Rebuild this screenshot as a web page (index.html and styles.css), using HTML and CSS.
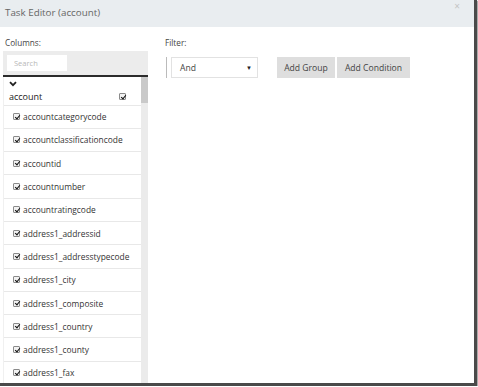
FILE: index.html
```html
<!DOCTYPE html>
<html>
<head>
<meta charset="utf-8">
<link rel="stylesheet" href="styles.css">
</head>
<body>
<div class="dialog">
  <div class="header">
    <span class="title">Task Editor (account)</span>
    <span class="close">×</span>
  </div>
  <div class="body">
    <div class="columns">
      <div class="label">Columns:</div>
      <div class="panel">
        <div class="panel-head">
          <input class="search" type="text" placeholder="Search">
        </div>
        <div class="list-wrap">
          <div class="list">
            <div class="group">
              <svg class="chev" width="8" height="6" viewBox="0 0 8 6"><path d="M1 1.2 L4 4.2 L7 1.2" fill="none" stroke="#222" stroke-width="1.8"/></svg>
              <div class="group-row"><span>account</span><span class="cb"></span></div>
            </div>
            <div class="row"><span class="cb"></span><span>accountcategorycode</span></div>
            <div class="row"><span class="cb"></span><span>accountclassificationcode</span></div>
            <div class="row"><span class="cb"></span><span>accountid</span></div>
            <div class="row"><span class="cb"></span><span>accountnumber</span></div>
            <div class="row"><span class="cb"></span><span>accountratingcode</span></div>
            <div class="row"><span class="cb"></span><span>address1_addressid</span></div>
            <div class="row"><span class="cb"></span><span>address1_addresstypecode</span></div>
            <div class="row"><span class="cb"></span><span>address1_city</span></div>
            <div class="row"><span class="cb"></span><span>address1_composite</span></div>
            <div class="row"><span class="cb"></span><span>address1_country</span></div>
            <div class="row"><span class="cb"></span><span>address1_county</span></div>
            <div class="row"><span class="cb"></span><span>address1_fax</span></div>
          </div>
          <div class="scrollbar"><div class="thumb"></div></div>
        </div>
      </div>
    </div>
    <div class="filter">
      <div class="label">Filter:</div>
      <div class="controls">
        <div class="bar"></div>
        <div class="select"><span>And</span><span class="arrow">▼</span></div>
        <button class="btn first">Add Group</button>
        <button class="btn second">Add Condition</button>
      </div>
    </div>
  </div>
</div>
</body>
</html>
```

FILE: styles.css
```css
html, body {
  margin: 0;
  padding: 0;
  background: #fff;
}
body {
  font-family: "Open Sans", "Noto Sans", sans-serif;
  color: #333;
}
.dialog {
  width: 474px;
  height: 383px;
  border-right: 3px solid #4a4a4a;
  border-bottom: 3px solid #4a4a4a;
  box-shadow: 1px 1px 1px #aaa;
  overflow: hidden;
  display: flex;
  flex-direction: column;
  background: #fff;
}
.header {
  height: 27px;
  flex: none;
  background: #e9edf0;
  display: flex;
  align-items: center;
  justify-content: space-between;
  padding: 0 14px 0 5px;
  box-sizing: border-box;
}
.title {
  font-size: 9.8px;
  color: #666;
  position: relative;
  top: -1px;
}
.close {
  align-self: flex-start;
  font-size: 10px;
  line-height: 10px;
  padding-top: 1px;
  color: #c4c4c4;
}
.body {
  flex: 1;
  display: flex;
  min-height: 0;
}
.label {
  font-size: 8.2px;
  color: #444;
  height: 24px;
  padding-top: 10px;
  box-sizing: border-box;
}
.columns {
  width: 148px;
  flex: none;
  padding-left: 5px;
  box-sizing: border-box;
  display: flex;
  flex-direction: column;
}
.panel {
  flex: 1;
  display: flex;
  flex-direction: column;
  margin-left: -2px;
  min-height: 0;
}
.panel-head {
  height: 20px;
  background: #ececec;
  border-bottom: 2px solid #2b2b2b;
  padding: 4px 0 0 4px;
  flex: none;
}
.search {
  width: 60px;
  height: 16px;
  border: none;
  margin: 0;
  padding: 0 0 0 7px;
  box-sizing: border-box;
  font-family: "Open Sans", sans-serif;
  font-size: 7.5px;
  background: #fff;
  outline: none;
  display: block;
}
.search::placeholder {
  color: #b8b8b8;
}
.list-wrap {
  flex: 1;
  display: flex;
  min-height: 0;
  border-left: 1px solid #f0f0f0;
}
.list {
  flex: 1;
  overflow: hidden;
}
.scrollbar {
  width: 7px;
  background: #ebebeb;
  flex: none;
}
.thumb {
  height: 26px;
  background: #c9c9c9;
}
.cb {
  width: 7px;
  height: 7px;
  box-sizing: border-box;
  border: 1px solid #8a8a8a;
  border-radius: 1px;
  background: #f2f2f2;
  position: relative;
  flex: none;
  display: inline-block;
}
.cb::after {
  content: "";
  position: absolute;
  left: 1.5px;
  top: -0.5px;
  width: 2px;
  height: 4px;
  border-right: 1.4px solid #111;
  border-bottom: 1.4px solid #111;
  transform: rotate(40deg);
}
.group {
  height: 28.5px;
  box-sizing: border-box;
  padding: 4px 0 0 5px;
  border-bottom: 1px solid #e8e8e8;
}
.chev {
  display: block;
}
.group-row {
  display: flex;
  align-items: center;
  justify-content: space-between;
  width: 117px;
  font-size: 9px;
  color: #222;
  margin-top: 3px;
}
.row {
  height: 23.3px;
  box-sizing: border-box;
  border-bottom: 1px solid #e8e8e8;
  display: flex;
  align-items: center;
  gap: 3px;
  padding-left: 9px;
  font-size: 8.4px;
  color: #333;
}
.filter {
  flex: 1;
  padding-left: 17px;
}
.controls {
  display: flex;
  align-items: center;
  height: 21px;
  margin-top: 6px;
}
.bar {
  width: 1px;
  height: 21px;
  background: #bbb;
  margin-left: 1px;
}
.select {
  width: 87px;
  height: 21px;
  box-sizing: border-box;
  border: 1px solid #e2e2e2;
  margin-left: 4px;
  display: flex;
  align-items: center;
  justify-content: space-between;
  padding: 0 5px 0 8px;
  font-size: 8.6px;
  color: #444;
}
.arrow {
  font-size: 6px;
  color: #222;
}
.btn {
  height: 21px;
  border: none;
  background: #dedede;
  font-family: "Open Sans", sans-serif;
  font-size: 8.6px;
  color: #444;
  padding: 0;
  margin: 0;
}
.btn.first {
  width: 58px;
  margin-left: 19px;
}
.btn.second {
  width: 73px;
  margin-left: 2px;
}
```
